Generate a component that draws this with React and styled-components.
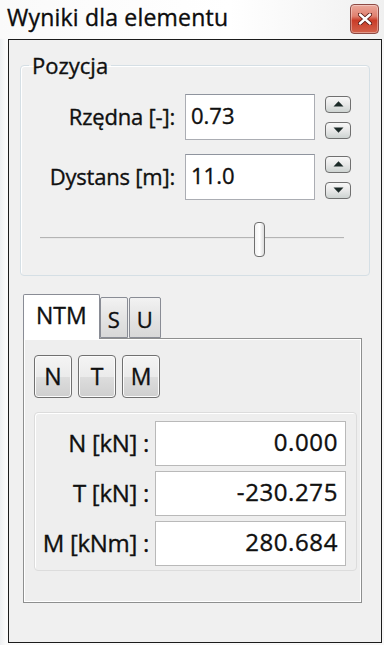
import React from 'react';
import styled, { createGlobalStyle, css } from 'styled-components';

const Colors = {
  Text: '#101010',
  Face: '#f0f0f0',
  Frame: '#f4f5f6',
  FieldBorder: '#abadb3',
  ButtonBorder: '#707070',
  GroupBorder: '#d5dfe5',
};

const GlobalStyle = createGlobalStyle`
  html, body {
    margin: 0;
    padding: 0;
    background: ${Colors.Frame};
  }
  body {
    font-family: "Open Sans", "Noto Sans", "DejaVu Sans", sans-serif;
    color: ${Colors.Text};
    -webkit-text-stroke: 0.35px currentColor;
  }
  * { box-sizing: border-box; }
`;

const App = () => {
  return (
    <>
      <GlobalStyle />
      <Window>
        <TitleBar>
          <Title>Wyniki dla elementu</Title>
          <CloseButton aria-label="close">
            <svg width="14" height="12" viewBox="0 0 14 12">
              <path d="M2 1.5 L12 10.5 M12 1.5 L2 10.5" stroke="#5a1a14" strokeWidth="4.2" strokeLinecap="round" />
              <path d="M2 1.5 L12 10.5 M12 1.5 L2 10.5" stroke="#ffffff" strokeWidth="2.4" strokeLinecap="round" />
            </svg>
          </CloseButton>
        </TitleBar>

        <Client>
          <GroupBox>
            <Legend>Pozycja</Legend>
            <SpinGrid>
              <FieldLabel>Rzędna [-]:</FieldLabel>
              <TextField>0.73</TextField>
              <Spinner />
              <FieldLabel>Dystans [m]:</FieldLabel>
              <TextField>11.0</TextField>
              <Spinner />
            </SpinGrid>
            <Slider>
              <SliderTrack />
              <SliderThumb style={{ left: '72%' }} />
            </Slider>
          </GroupBox>

          <Tabs>
            <TabStrip>
              <Tab $active>NTM</Tab>
              <Tab>S</Tab>
              <Tab>U</Tab>
            </TabStrip>
            <TabPanel>
              <ButtonRow>
                <ToolButton>N</ToolButton>
                <ToolButton>T</ToolButton>
                <ToolButton>M</ToolButton>
              </ButtonRow>
              <ValuesBox>
                <ValueLabel>N [kN] :</ValueLabel>
                <ValueField>0.000</ValueField>
                <ValueLabel>T [kN] :</ValueLabel>
                <ValueField>-230.275</ValueField>
                <ValueLabel>M [kNm] :</ValueLabel>
                <ValueField>280.684</ValueField>
              </ValuesBox>
            </TabPanel>
          </Tabs>
        </Client>
      </Window>
    </>
  );
};

export default App;

const Arrow = ({ down }) => (
  <svg width="11" height="6" viewBox="0 0 11 6">
    <path d={down ? 'M0.5 0.5 L10.5 0.5 L5.5 5.8 Z' : 'M0.5 5.5 L10.5 5.5 L5.5 0.2 Z'} fill="#1c2a28" />
  </svg>
);

const Spinner = () => (
  <SpinColumn>
    <SpinButton>
      <Arrow />
    </SpinButton>
    <SpinButton>
      <Arrow down />
    </SpinButton>
  </SpinColumn>
);

const Window = styled.div`
  width: 384px;
  height: 645px;
  display: flex;
  flex-direction: column;
  background: linear-gradient(90deg, #eef0f2 0px, #fbfbfb 6px, #f7f7f7 100%);
`;

const TitleBar = styled.div`
  height: 39px;
  flex: none;
  display: flex;
  align-items: flex-start;
  justify-content: space-between;
  padding: 2px 5px 0 7px;
  background: linear-gradient(90deg, #fafafa 0%, #ffffff 60%, #f0f0f0 100%);
`;

const Title = styled.div`
  font-size: 23px;
  line-height: 30px;
  letter-spacing: 0.2px;
  color: #0c0c0c;
`;

const CloseButton = styled.div`
  width: 29px;
  height: 30px;
  margin-top: 2px;
  border-radius: 4px;
  border: 1px solid #8d4a44;
  display: flex;
  align-items: center;
  justify-content: center;
  background: linear-gradient(
    180deg,
    #eba99c 0%,
    #e0806f 40%,
    #c93b27 55%,
    #d3634c 100%
  );
  box-shadow: inset 0 0 0 1px rgba(255, 255, 255, 0.35);
`;

const Client = styled.div`
  flex: 1;
  margin: 0 2px 2px 8px;
  border: 1.5px solid #1c1c1c;
  background: ${Colors.Face};
  padding: 12px 10px 0 11px;
  display: flex;
  flex-direction: column;
`;

const GroupBox = styled.fieldset`
  margin: 0;
  width: 350px;
  height: 224px;
  padding: 16px 0 0 0;
  border: 1px solid ${Colors.GroupBorder};
  border-radius: 4px;
  box-shadow: inset 1px 1px 0 #ffffff;
  position: relative;
`;

const Legend = styled.legend`
  font-size: 22px;
  line-height: 26px;
  padding: 0 3px;
  margin-left: 8px;
`;

const SpinGrid = styled.div`
  display: grid;
  grid-template-columns: 154px 130px 27px;
  grid-auto-rows: 46px;
  column-gap: 10px;
  row-gap: 14px;
  align-items: center;
`;

const FieldLabel = styled.div`
  font-size: 22px;
  text-align: right;
  white-space: nowrap;
  letter-spacing: -0.2px;
  padding-bottom: 3px;
`;

const fieldStyles = css`
  height: 100%;
  background: #ffffff;
  border: 1px solid ${Colors.FieldBorder};
  border-top-color: #8f949e;
  display: flex;
  align-items: center;
  white-space: nowrap;
`;

const TextField = styled.div`
  ${fieldStyles};
  padding: 0 6px 4px 5px;
  font-size: 22px;
`;

const SpinColumn = styled.div`
  height: 43px;
  display: flex;
  flex-direction: column;
  justify-content: space-between;
`;

const SpinButton = styled.div`
  height: 17px;
  width: 26px;
  border: 1.5px solid ${Colors.ButtonBorder};
  border-radius: 4px;
  background: linear-gradient(180deg, #f8f8f8 0%, #e8e8e8 50%, #cdd3d1 100%);
  display: flex;
  align-items: center;
  justify-content: center;
`;

const Slider = styled.div`
  position: relative;
  height: 34px;
  margin: 22px 25px 0 19px;
`;

const SliderTrack = styled.div`
  position: absolute;
  left: 0;
  right: 0;
  top: 15px;
  height: 2px;
  background: #b4b4b4;
  border-bottom: 1px solid #e8e8e8;
`;

const SliderThumb = styled.div`
  position: absolute;
  top: 0;
  width: 11px;
  height: 35px;
  margin-left: -5px;
  border: 1.5px solid #6f6f6f;
  border-radius: 4px;
  background: linear-gradient(90deg, #f2f2f2, #ffffff 50%, #dcdcdc);
`;

const Tabs = styled.div`
  margin: 18px 0 0 3px;
  width: 339px;
  display: flex;
  flex-direction: column;
`;

const TabStrip = styled.div`
  display: flex;
  align-items: flex-end;
  height: 44px;
  position: relative;
  z-index: 1;
`;

const Tab = styled.div`
  height: ${(p) => (p.$active ? 45 : 41)}px;
  padding: ${(p) => (p.$active ? '2px 12px 0 12px' : '3px 7px 0 7px')};
  margin-bottom: ${(p) => (p.$active ? -1 : 0)}px;
  margin-right: ${(p) => (p.$active ? 0 : 1)}px;
  border: 1px solid #898c95;
  border-bottom: ${(p) => (p.$active ? 'none' : '1px solid #898c95')};
  border-radius: 2px 2px 0 0;
  background: ${(p) =>
    p.$active ? '#ffffff' : 'linear-gradient(180deg, #f2f2f2 0%, #e4e4e4 50%, #d8d8d8 100%)'};
  font-size: ${(p) => (p.$active ? 23 : 22)}px;
  line-height: 36px;
`;

const TabPanel = styled.div`
  height: 265px;
  border: 1.5px solid #8e8f8f;
  background: #eeeeee;
  box-shadow: inset 1px 1px 0 #ffffff, inset -1px -1px 0 #ffffff;
  padding: 16px 2px 0 10px;
  display: flex;
  flex-direction: column;
`;

const ButtonRow = styled.div`
  display: flex;
  gap: 6px;
`;

const ToolButton = styled.div`
  width: 38px;
  height: 43px;
  border: 1.5px solid ${Colors.ButtonBorder};
  border-radius: 4px;
  background: linear-gradient(180deg, #f4f4f4 0%, #ebebeb 50%, #dddddd 51%, #cfcfcf 100%);
  box-shadow: inset 0 0 0 1px #fbfbfb;
  display: flex;
  align-items: center;
  justify-content: center;
  font-size: 23px;
  padding-bottom: 2px;
`;

const ValuesBox = styled.div`
  margin-top: 14px;
  width: 323px;
  height: 159px;
  padding: 8px 10px 0 0;
  border: 1px solid #dcdcdc;
  border-radius: 4px;
  box-shadow: inset 1px 1px 0 #ffffff;
  display: grid;
  grid-template-columns: 1fr 191px;
  grid-auto-rows: 45px;
  column-gap: 6px;
  row-gap: 5px;
  align-items: center;
`;

const ValueLabel = styled.div`
  font-size: 24px;
  text-align: right;
  white-space: nowrap;
  letter-spacing: -0.3px;
  padding-bottom: 3px;
`;

const ValueField = styled.div`
  ${fieldStyles};
  justify-content: flex-end;
  padding: 0 7px 4px 5px;
  font-size: 24px;
  letter-spacing: 0.6px;
  border-color: #b9b9b9;
`;
